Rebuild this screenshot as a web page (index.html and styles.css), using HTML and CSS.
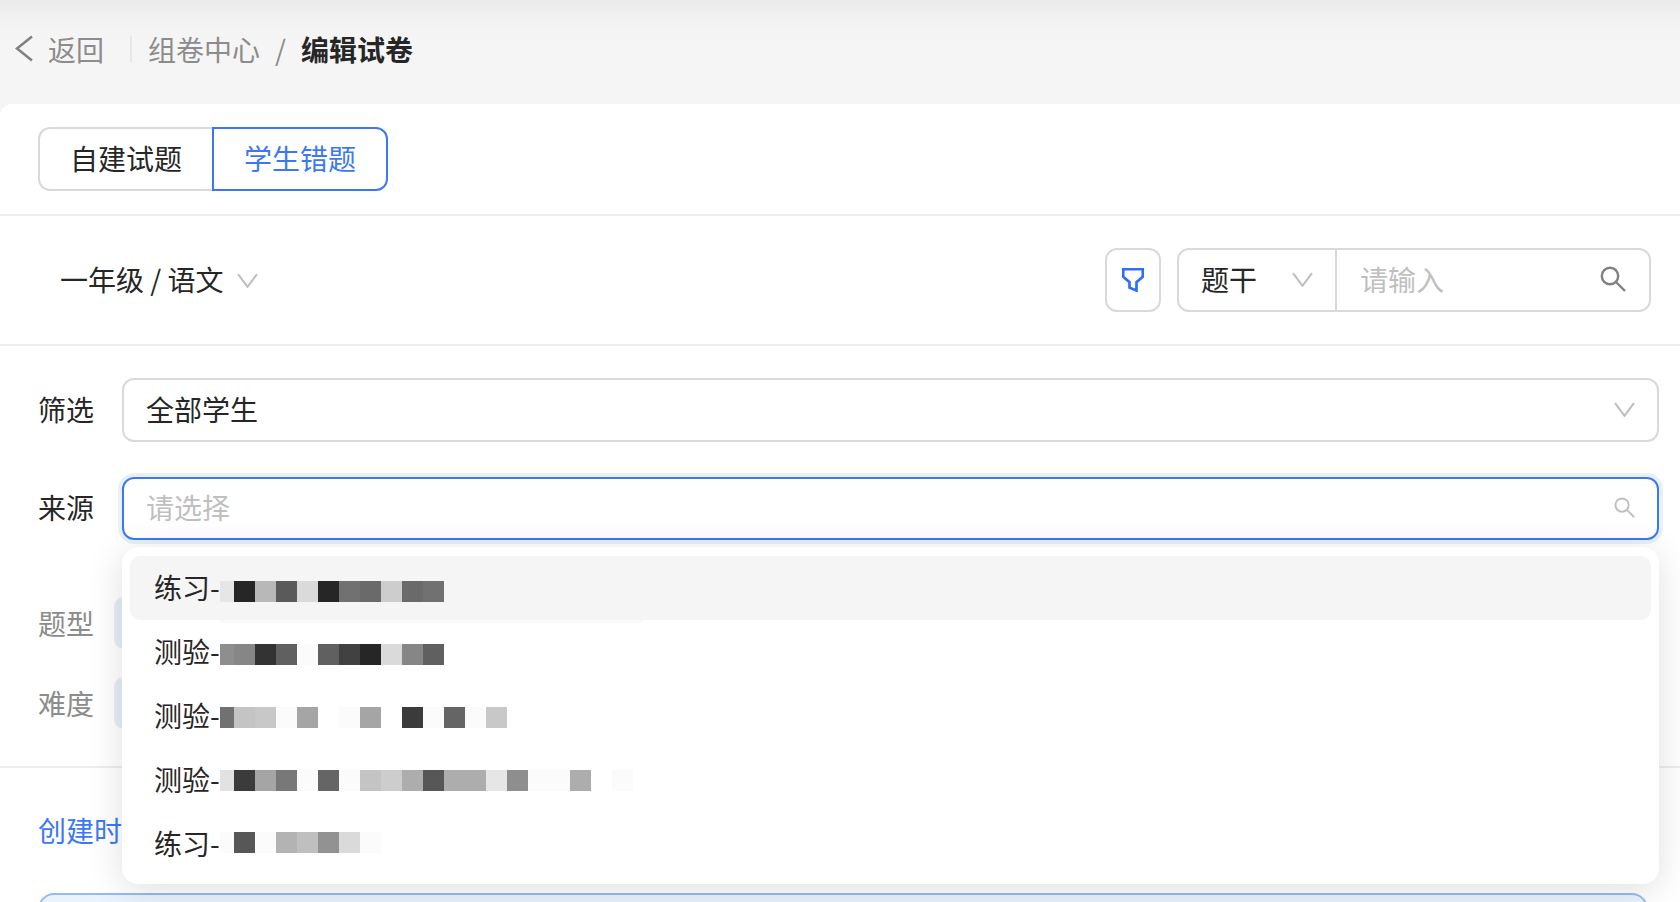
FILE: index.html
```html
<!DOCTYPE html>
<html lang="zh-CN">
<head>
<meta charset="utf-8">
<title>编辑试卷</title>
<link rel="stylesheet" href="styles.css">
</head>
<body>
<div class="page">
  <header class="topbar">
    <a class="back">
      <svg class="back-icon" viewBox="0 0 18 27"><path d="M17 1.500 2 13.500l15 12"/></svg>
      <span>返回</span>
    </a>
    <i class="topbar-sep"></i>
    <span class="crumb">组卷中心</span>
    <span class="crumb-slash">/</span>
    <strong class="crumb-current">编辑试卷</strong>
  </header>

  <main class="panel">
    <div class="tabs-row">
      <div class="tabs">
        <button class="tab">自建试题</button>
        <button class="tab tab-active">学生错题</button>
      </div>
    </div>

    <div class="toolbar">
      <div class="grade">
        <span>一年级 / 语文</span>
        <svg class="chev" viewBox="0 0 20 14"><path d="M1 1l9 12 9-12"/></svg>
      </div>
      <div class="tools">
        <button class="filter-btn">
          <svg class="filter-icon" viewBox="0 0 22 24"><path d="M1.200 1.200h19.600v7.600l-6.300 5.400v8.300l-7-2.800v-5.500l-6.300-5.400z"/></svg>
        </button>
        <div class="search-group">
          <div class="search-type">
            <span>题干</span>
            <svg class="chev" viewBox="0 0 20 14"><path d="M1 1l9 12 9-12"/></svg>
          </div>
          <div class="search-input">
            <span class="placeholder">请输入</span>
            <svg class="search-icon" viewBox="0 0 26 26"><circle cx="10" cy="10" r="8.200"/><path d="M16 16l9 9"/></svg>
          </div>
        </div>
      </div>
    </div>

    <section class="filters">
      <div class="field">
        <label class="field-label">筛选</label>
        <div class="control">
          <span>全部学生</span>
          <svg class="chev" viewBox="0 0 20 14"><path d="M1 1l9 12 9-12"/></svg>
        </div>
      </div>
      <div class="field field-source">
        <label class="field-label">来源</label>
        <div class="control control-focus">
          <span class="placeholder">请选择</span>
          <svg class="search-icon search-icon-small" viewBox="0 0 26 26"><circle cx="10" cy="10" r="8.200"/><path d="M16 16l9 9"/></svg>
        </div>
      </div>
      <div class="field-muted field-type">
        <label class="field-label">题型</label>
        <span class="pill"></span>
      </div>
      <div class="field-muted field-level">
        <label class="field-label">难度</label>
        <span class="pill"></span>
      </div>
    </section>

    <div class="sort-row">
      <span class="sort-link">创建时间</span>
    </div>
    <div class="notice"></div>

    <div class="dropdown">
      <div class="option option-hover">
        <span class="option-type">练习-</span>
        <div class="mosaic m1">
          <i class="first e6"></i><i class="s26"></i><i class="b8"></i><i class="s5a"></i><i class="da"></i><i class="s26"></i><i class="s71"></i><i class="s6a"></i><i class="cd"></i><i class="s6a"></i><i class="s71"></i>
        </div>
        <span class="hover-trace"></span>
      </div>
      <div class="option">
        <span class="option-type">测验-</span>
        <div class="mosaic m2">
          <i class="first s8e"></i><i class="s86"></i><i class="s33"></i><i class="s60"></i><i class="fb"></i><i class="s60"></i><i class="s41"></i><i class="s26"></i><i class="da"></i><i class="s86"></i><i class="s60"></i>
        </div>
      </div>
      <div class="option">
        <span class="option-type">测验-</span>
        <div class="mosaic m3">
          <i class="first s71"></i><i class="c4"></i><i class="c8"></i><i class="fb"></i><i class="a5"></i><i></i><i class="fb"></i><i class="a5"></i><i></i><i class="s3b"></i><i class="fb"></i><i class="s65"></i><i class="fb"></i><i class="c8"></i>
        </div>
      </div>
      <div class="option">
        <span class="option-type">测验-</span>
        <div class="mosaic m4">
          <i class="first e2"></i><i class="s3b"></i><i class="a5"></i><i class="s78"></i><i class="fb"></i><i class="s65"></i><i class="fb"></i><i class="c4"></i><i class="cd"></i><i class="ad"></i><i class="s57"></i><i class="ad"></i><i class="ad"></i><i class="e6"></i><i class="s8e"></i><i class="fb"></i><i class="fb"></i><i class="ad"></i><i></i><i class="fb"></i>
        </div>
      </div>
      <div class="option">
        <span class="option-type">练习-</span>
        <div class="mosaic m5">
          <i class="first fb"></i><i class="s57"></i><i class="fb"></i><i class="b3"></i><i class="bf"></i><i class="s92"></i><i class="da"></i><i class="fb"></i>
        </div>
      </div>
    </div>
  </main>
</div>
</body>
</html>
```

FILE: styles.css
```css
* { box-sizing: border-box; }

html, body {
  margin: 0;
  padding: 0;
}

body {
  font-family: "Noto Sans CJK SC", "Noto Sans", sans-serif;
  font-size: 28px;
  color: #262626;
}

.page {
  width: 1680px;
  height: 902px;
  overflow: hidden;
  display: flex;
  flex-direction: column;
  background: linear-gradient(#e9eaeb 0, #f2f2f3 18px, #f5f5f5 40px);
}

/* top bar */
.topbar {
  flex: none;
  height: 104px;
  padding: 0 0 7px 15px;
  display: flex;
  align-items: center;
  line-height: 40px;
  color: #8c8c8c;
}

.back {
  display: flex;
  align-items: center;
  gap: 15px;
}

.back-icon {
  width: 18px;
  height: 27px;
  fill: none;
  stroke: #808080;
  stroke-width: 2.600;
}

.topbar-sep {
  width: 2px;
  height: 26px;
  margin: 0 16px 0 26px;
  background: #e6e6e6;
}

.crumb-slash {
  margin: 0 15px;
}

.crumb-current {
  color: #262626;
  font-weight: 700;
}

/* panel */
.panel {
  position: relative;
  flex: 1;
  background: #fff;
  border-radius: 12px 0 0 0;
}

.tabs-row {
  padding: 23px 0 23px 38px;
  border-bottom: 2px solid #eeeeee;
}

.tabs {
  display: flex;
  height: 64px;
}

.tab {
  width: 174px;
  height: 64px;
  padding: 0 0 2px;
  background: #fff;
  font: inherit;
  color: #262626;
  border: 2px solid #d9d9d9;
  border-right: 0;
  border-radius: 12px 0 0 12px;
}

.tab-active {
  width: 176px;
  color: #3b78f5;
  border: 2px solid #3b78f5;
  border-radius: 0 12px 12px 0;
}

.toolbar {
  height: 130px;
  padding: 32px 29px 32px 60px;
  display: flex;
  justify-content: space-between;
  align-items: center;
  border-bottom: 2px solid #eeeeee;
}

.grade {
  display: flex;
  align-items: center;
  gap: 13px;
}

.grade span {
  padding-bottom: 2px;
}

.chev {
  flex: none;
  width: 21px;
  height: 15px;
  fill: none;
  stroke: #bfbfbf;
  stroke-width: 2;
}

.tools {
  display: flex;
  gap: 16px;
}

.filter-btn {
  width: 56px;
  height: 64px;
  padding: 0;
  display: flex;
  align-items: center;
  justify-content: center;
  background: #fff;
  border: 2px solid #d9d9d9;
  border-radius: 12px;
}

.filter-icon {
  width: 22px;
  height: 24px;
  fill: none;
  stroke: #2f6ff5;
  stroke-width: 2.700;
}

.search-group {
  width: 474px;
  height: 64px;
  display: flex;
  border: 2px solid #d9d9d9;
  border-radius: 12px;
}

.search-type {
  width: 158px;
  padding: 0 22px 2px 22px;
  display: flex;
  align-items: center;
  justify-content: space-between;
  border-right: 2px solid #d9d9d9;
}

.search-input {
  flex: 1;
  padding: 0 23px 2px 23px;
  display: flex;
  align-items: center;
  justify-content: space-between;
}

.placeholder {
  color: #bfbfbf;
}

.search-icon {
  flex: none;
  width: 26px;
  height: 26px;
  fill: none;
  stroke: #808080;
  stroke-width: 2.400;
}

.search-icon-small {
  width: 21px;
  height: 21px;
  stroke: #bfbfbf;
}

/* filters */
.filters {
  padding: 32px 21px 0 38px;
}

.field {
  display: flex;
  align-items: center;
  gap: 28px;
}

.field-source {
  margin-top: 35px;
}

.field-label {
  flex: none;
  width: 56px;
  padding-bottom: 2px;
}

.field-source .field-label {
  padding-bottom: 3px;
}

.control {
  flex: 1;
  height: 64px;
  padding: 0 22px 2px;
  display: flex;
  align-items: center;
  justify-content: space-between;
  border: 2px solid #d9d9d9;
  border-radius: 12px;
}

.control-focus {
  height: 63px;
  padding-bottom: 3px;
  border-color: #3b78f5;
  box-shadow: 0 0 0 4px #e8f0fa;
}

.field-muted {
  display: flex;
  align-items: center;
  gap: 20px;
  height: 52px;
  color: #8c8c8c;
}

.field-muted .field-label {
  padding-bottom: 0;
}

.field-type {
  margin-top: 57px;
}

.field-level {
  margin-top: 28px;
}

.pill {
  width: 120px;
  height: 52px;
  background: #e6eef8;
  border-radius: 10px;
}

.sort-row {
  margin-top: 37px;
  padding: 47px 0 0 38px;
  height: 127px;
  border-top: 2px solid #eeeeee;
  line-height: 30px;
}

.sort-link {
  color: #3b78f5;
}

.notice {
  height: 40px;
  margin: 0 32px 0 38px;
  background: #e9f2fd;
  border: 2px solid #93bdf2;
  border-radius: 16px 16px 0 0;
}

/* dropdown */
.dropdown {
  position: absolute;
  left: 122px;
  top: 443px;
  width: 1537px;
  height: 337px;
  padding: 9px 8px;
  background: #fff;
  border-radius: 16px;
  box-shadow: 0 6px 36px rgba(0, 0, 0, 0.13);
}

.option {
  position: relative;
  height: 64px;
  padding-left: 24px;
  display: flex;
  align-items: center;
  border-radius: 10px;
}

.option-hover {
  background: #f5f5f5;
}

.option-type {
  flex: none;
  width: 66px;
  padding-bottom: 2px;
  white-space: nowrap;
}

.hover-trace {
  position: absolute;
  left: 90px;
  top: 64px;
  width: 423px;
  height: 3px;
  background: #f9f9f9;
}

.mosaic {
  display: flex;
}

.mosaic i {
  flex: none;
  width: 21px;
  height: 21px;
}

.mosaic .first {
  width: 14px;
}

.m1 { margin-top: 6px; }
.m2 { margin-top: 5px; }
.m3 { margin-top: 2px; }
.m4 { margin-top: 0; }
.m5 { margin-top: -3px; }

.s26 { background: #262626; }
.s33 { background: #333333; }
.s3b { background: #3b3b3b; }
.s41 { background: #414141; }
.s57 { background: #575757; }
.s5a { background: #5a5a5a; }
.s60 { background: #606060; }
.s65 { background: #656565; }
.s6a { background: #6a6a6a; }
.s71 { background: #717171; }
.s78 { background: #787878; }
.s86 { background: #868686; }
.s8e { background: #8e8e8e; }
.s92 { background: #929292; }
.a5 { background: #a5a5a5; }
.ad { background: #adadad; }
.b3 { background: #b3b3b3; }
.b8 { background: #b8b8b8; }
.bf { background: #bfbfbf; }
.c4 { background: #c4c4c4; }
.c8 { background: #c8c8c8; }
.cd { background: #cdcdcd; }
.da { background: #dadada; }
.e2 { background: #e2e2e2; }
.e6 { background: #e6e6e6; }
.fb { background: #fbfbfb; }
```
